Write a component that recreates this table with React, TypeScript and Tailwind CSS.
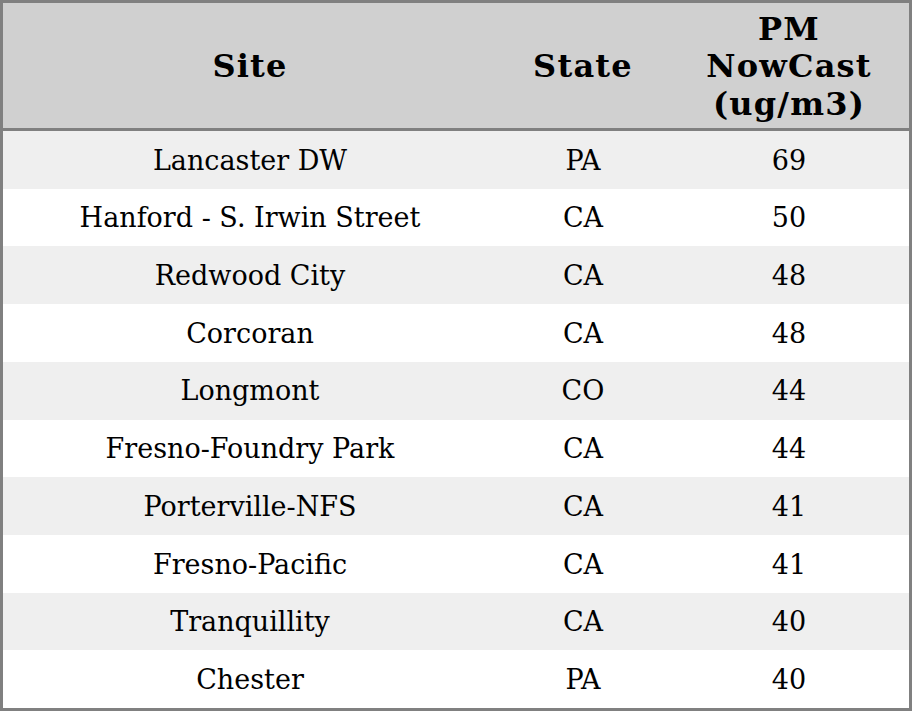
import React from "react";

const rows: [string, string, string][] = [
  ["Lancaster DW", "PA", "69"],
  ["Hanford - S. Irwin Street", "CA", "50"],
  ["Redwood City", "CA", "48"],
  ["Corcoran", "CA", "48"],
  ["Longmont", "CO", "44"],
  ["Fresno-Foundry Park", "CA", "44"],
  ["Porterville-NFS", "CA", "41"],
  ["Fresno-Pacific", "CA", "41"],
  ["Tranquillity", "CA", "40"],
  ["Chester", "PA", "40"],
];

export default function App() {
  return (
    <div
      className="w-[912px] h-[711px] border-[3px] border-[#808080] bg-white text-black flex flex-col"
      style={{ fontFamily: '"DejaVu Serif", serif' }}
    >
      <div className="h-[128px] shrink-0 flex bg-[#d0d0d0] border-b-[3px] border-[#808080] text-[32px] font-bold leading-[37.5px] tracking-[1.2px]">
        <div className="w-[494px] flex items-center justify-center pt-[2px]">Site</div>
        <div className="w-[172px] flex items-center justify-center pt-[2px]">State</div>
        <div className="w-[240px] flex items-center justify-center text-center pt-[3px]">
          PM
          <br />
          NowCast
          <br />
          (ug/m3)
        </div>
      </div>
      <div className="flex-1 flex flex-col">
        {rows.map((r, i) => (
          <div
            key={i}
            className={`flex-1 flex items-center pt-[2px] text-[27px] ${i % 2 === 0 ? "bg-[#efefef]" : "bg-white"}`}
          >
            <div className="w-[494px] text-center">{r[0]}</div>
            <div className="w-[172px] text-center">{r[1]}</div>
            <div className="w-[240px] text-center">{r[2]}</div>
          </div>
        ))}
      </div>
    </div>
  );
}
